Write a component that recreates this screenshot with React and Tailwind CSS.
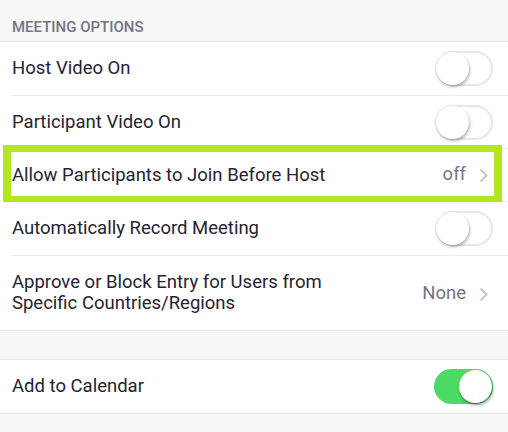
function Toggle({ on }) {
  if (on) {
    return (
      <div className="relative h-[35px] w-[59px] rounded-full bg-[#4cd964]">
        <div className="absolute right-[1px] top-[1px] h-[33px] w-[33px] rounded-full bg-white shadow-[1px_2px_3px_rgba(0,0,0,0.45)]" />
      </div>
    )
  }
  return (
    <div className="relative h-[35px] w-[58px] rounded-full border-2 border-[#e6e6e6] bg-white">
      <div className="absolute left-[-1px] top-[-1px] h-[33px] w-[33px] rounded-full bg-white shadow-[1px_2px_3px_rgba(0,0,0,0.3)]" />
    </div>
  )
}

function Chevron() {
  return (
    <svg width="9" height="15" viewBox="0 0 9 15" className="ml-[13px] mr-[5px]">
      <path d="M1.5 1.5 L7.5 7.5 L1.5 13.5" fill="none" stroke="#c7c7cc" strokeWidth="2" />
    </svg>
  )
}

function Row({ children, right, last, highlight, h = 'h-[54px]' }) {
  return (
    <div className={`relative flex items-center bg-white pl-[12px] ${h}`}>
      <div className={`flex h-full flex-1 items-center pr-[15px] ${last ? '' : 'border-b border-[#ececf0]'}`}>
        <div className="flex-1 text-[18.5px] leading-[21px] text-[#232333]">{children}</div>
        {right}
      </div>
      {highlight && (
        <div className="pointer-events-none absolute left-[3px] right-[6px] top-[-4px] bottom-[-1px] border-x-[8px] border-y-[7px] border-[#b4e61e]" />
      )}
    </div>
  )
}

export default function App() {
  return (
    <div className="h-[432px] w-[508px] overflow-hidden bg-[#f7f7f8] font-['Roboto',sans-serif]">
      <div className="h-[42px] border-b border-[#e8e8ec] pl-[12px] pt-[18px] text-[15px] font-medium leading-[18px] text-[#747487] uppercase">
        Meeting Options
      </div>
      <Row right={<Toggle />}>Host Video On</Row>
      <Row h="h-[53px]" right={<Toggle />}>Participant Video On</Row>
      <Row
        h="h-[53px]"
        highlight
        right={
          <div className="flex items-center text-[18.5px] text-[#747487]">
            off
            <Chevron />
          </div>
        }
      >
        Allow Participants to Join Before Host
      </Row>
      <Row right={<Toggle />}>Automatically Record Meeting</Row>
      <Row
        h="h-[74px]"
        last
        right={
          <div className="flex items-center pt-[2px] text-[18.5px] text-[#747487]">
            None
            <Chevron />
          </div>
        }
      >
        Approve or Block Entry for Users from
        <br />
        Specific Countries/Regions
      </Row>
      <div className="h-[30px] border-y border-[#e8e8ec]" />
      <Row h="h-[53px]" last right={<Toggle on />}>Add to Calendar</Row>
      <div className="border-t border-[#e8e8ec]" />
    </div>
  )
}
